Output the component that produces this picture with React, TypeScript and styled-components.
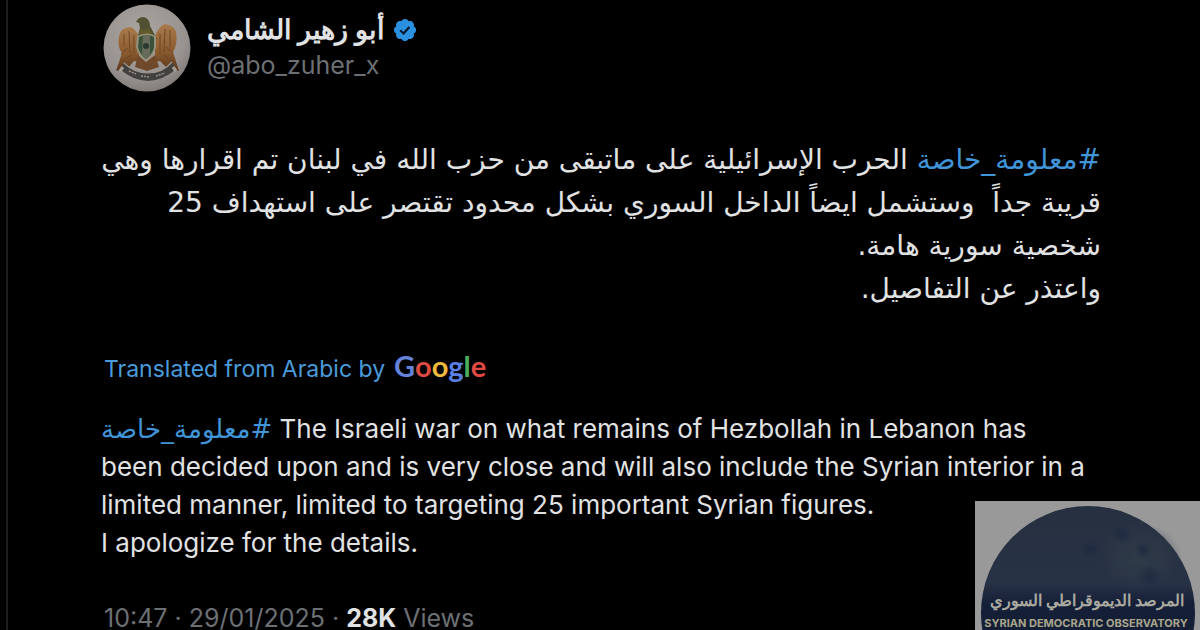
import React from 'react';
import styled, { createGlobalStyle } from 'styled-components';

const GlobalStyle = createGlobalStyle`
  * { box-sizing: border-box; }
  body {
    margin: 0;
    background: #000;
    color: #e1e2e3;
    font-family: Inter, "DejaVu Sans", sans-serif;
    overflow: hidden;
  }
`;

const Page = styled.main`
  min-height: 100vh;
  padding-left: 6px;
`;

const Post = styled.article`
  min-height: 100vh;
  border-left: 2px solid #1c1d1f;
  padding: 4px 99px 0 93px;
`;

const Header = styled.header`
  display: flex;
  gap: 16px;
  padding-left: 2px;
`;

const AvatarArt = styled.svg`
  flex: none;
  width: 88px;
  height: 88px;
`;

const Names = styled.div`
  display: flex;
  flex-direction: column;
  padding-top: 8px;
`;

const NameRow = styled.div`
  display: flex;
  align-items: center;
  gap: 7px;
  height: 36px;
`;

const DisplayName = styled.h1`
  margin: 0;
  font-family: Inter, sans-serif;
  font-size: 27px;
  line-height: 36px;
  font-weight: 700;
`;

const Badge = styled.svg`
  width: 26px;
  height: 26px;
`;

const Handle = styled.a`
  color: #6c7074;
  font-size: 25px;
  line-height: 34px;
  text-decoration: none;
`;

const Original = styled.p`
  margin: 46px 0 0;
  font-family: "DejaVu Sans", sans-serif;
  font-size: 28px;
  line-height: 43px;
  white-space: pre-wrap;
`;

const Tag = styled.a`
  color: #3f95d8;
  font-family: "DejaVu Sans", sans-serif;
  line-height: 1;
  text-decoration: none;
`;

const Credit = styled.div`
  display: flex;
  align-items: baseline;
  gap: 9px;
  margin-top: 36px;
  padding-left: 3px;
  font-size: 23px;
  line-height: 40px;
  color: #4a9bdc;
`;

const Wordmark = styled.span`
  font-family: Lato, sans-serif;
  font-size: 29px;
  font-weight: 700;
`;

const Letter = styled.span<{ $color: string }>`
  color: ${(p) => p.$color};
`;

const Translation = styled.p`
  margin: 21px 0 0;
  font-size: 26px;
  line-height: 38px;
`;

const Meta = styled.footer`
  margin-top: 40px;
  padding-left: 3px;
  font-size: 25px;
  line-height: 32px;
  color: #6c7074;
`;

const Count = styled.strong`
  color: #e1e2e3;
  font-weight: 700;
`;

const Watermark = styled.aside`
  position: fixed;
  right: 0;
  bottom: 0;
  width: 225px;
  height: 129px;
  overflow: hidden;
  background: #999;
`;

const Seal = styled.svg`
  display: block;
  width: 225px;
  height: 225px;
`;

const googleLetters = [
  ['G', '#6484dc'],
  ['o', '#dc4a40'],
  ['o', '#f0b83c'],
  ['g', '#5a80e4'],
  ['l', '#4cae5c'],
  ['e', '#e04a40'],
];

function Avatar() {
  return (
    <AvatarArt viewBox="0 0 88 88" role="img" aria-label="Profile picture">
      <defs>
        <radialGradient id="disc" cx="0.45" cy="0.35" r="0.7">
          <stop offset="0" stopColor="#aca6a1" />
          <stop offset="0.7" stopColor="#989290" />
          <stop offset="1" stopColor="#7c7674" />
        </radialGradient>
        <linearGradient id="wing" x1="0" y1="0" x2="0" y2="1">
          <stop offset="0" stopColor="#a97a4c" />
          <stop offset="0.6" stopColor="#8a5a2e" />
          <stop offset="1" stopColor="#573820" />
        </linearGradient>
      </defs>
      <circle cx="44" cy="44" r="43.5" fill="url(#disc)" />
      <path d="M36 32 Q32 24 27 23 Q17 24 16 32 Q14 43 19 49 L13 67 L25 64 L31 57 L36 58 Z" fill="url(#wing)" />
      <path d="M52 32 Q56 22 62 20 Q71 21 73 28 Q75 40 70 48 L76 67 L64 64 L57 57 L52 58 Z" fill="url(#wing)" />
      <path d="M21 30 L21 42 M26 27 L27 49 M31 31 L31 50 M18 50 L25 44 M18 57 L29 51 M67 26 L67 43 M62 25 L61 48 M57 30 L57 50 M70 49 L63 43 M70 58 L61 51" fill="none" stroke="#6e4827" strokeWidth="1" />
      <path d="M34 35 L37 24 L36 19 L33 18 Q35 13 41 13 Q47 15 47 22 L54 35 Z" fill="#4f5130" />
      <path d="M37 26 L46 25 L53 35 L35 36 Z" fill="#625b2c" />
      <path d="M35 51 L43 58 L52 51 L56 63 L44 67 L32 63 Z" fill="#70492a" />
      <path d="M34 32 Q44 27 53 32 L53 44 Q50 54 43 57 Q35 53 33 43 Z" fill="#96917c" />
      <path d="M36 33 Q44 29 51 33 L51 44 Q48 52 43 55 Q37 51 35 43 Z" fill="#3a5139" />
      <path d="M40 31 L47 31 L47 51 L43 55 L39 51 Z" fill="#686b5c" />
      <circle cx="43" cy="42" r="3" fill="#29382f" />
      <path d="M21 59 Q30 68 44 69 Q60 69 69 58 L73 65 Q61 76 45 77 Q29 76 18 66 Z" fill="#434140" />
      <path d="M21 59 Q30 68 44 69 Q60 69 69 58" fill="none" stroke="#9b948b" strokeWidth="1.2" />
      <path d="M26 67 L33 70 M38 72 L47 73 M53 72 L62 69" stroke="#96918a" strokeWidth="1.5" strokeDasharray="2 1" />
      <path d="M20 63 L17 67 M70 63 L73 67" stroke="#a79f96" strokeWidth="3" />
    </AvatarArt>
  );
}

export default function App() {
  return (
    <>
      <GlobalStyle />
      <Page>
        <Post>
          <Header>
            <Avatar />
            <Names>
              <NameRow>
                <DisplayName dir="rtl" lang="ar">أبو زهير الشامي</DisplayName>
                <Badge viewBox="0 0 22 22" role="img" aria-label="Verified account">
                  <path
                    fill="#2b90e0"
                    d="M20.396 11c-.018-.646-.215-1.275-.57-1.816-.354-.54-.852-.972-1.438-1.246.223-.607.27-1.264.14-1.897-.131-.634-.437-1.218-.882-1.687-.47-.445-1.053-.75-1.687-.882-.633-.13-1.29-.083-1.897.14-.273-.587-.704-1.086-1.245-1.44S11.647 1.62 11 1.604c-.646.017-1.273.213-1.813.568s-.969.854-1.24 1.44c-.608-.223-1.267-.272-1.902-.14-.635.13-1.22.436-1.69.882-.445.47-.749 1.055-.878 1.688-.13.633-.08 1.29.144 1.896-.587.274-1.087.705-1.443 1.245-.356.54-.555 1.17-.574 1.817.02.647.218 1.276.574 1.817.356.54.856.972 1.443 1.245-.224.606-.274 1.263-.144 1.896.13.634.433 1.218.877 1.688.47.443 1.054.747 1.687.878.633.132 1.29.084 1.897-.136.274.586.705 1.084 1.246 1.439.54.354 1.17.551 1.816.569.647-.016 1.276-.213 1.817-.567s.972-.854 1.245-1.44c.604.239 1.266.296 1.903.164.636-.132 1.22-.447 1.68-.907.46-.46.776-1.044.908-1.681s.075-1.299-.165-1.903c.586-.274 1.084-.705 1.439-1.246.354-.54.551-1.17.569-1.816z"
                  />
                  <path d="M7 11.3 L9.8 14 L14.7 8.4" fill="none" stroke="#06182a" strokeWidth="1.8" />
                </Badge>
              </NameRow>
              <Handle href="#profile">@abo_zuher_x</Handle>
            </Names>
          </Header>

          <Original dir="rtl" lang="ar">
            <Tag href="#tag">#معلومة_خاصة</Tag>
            {' الحرب الإسرائيلية على ماتبقى من حزب الله في لبنان تم اقرارها وهي\nقريبة جداً  وستشمل ايضاً الداخل السوري بشكل محدود تقتصر على استهداف 25\nشخصية سورية هامة.\nواعتذر عن التفاصيل.'}
          </Original>

          <Credit>
            <span>Translated from Arabic by</span>
            <Wordmark>
              {googleLetters.map(([char, color], i) => (
                <Letter key={i} $color={color}>{char}</Letter>
              ))}
            </Wordmark>
          </Credit>

          <Translation>
            <Tag href="#tag" dir="rtl" lang="ar">#معلومة_خاصة</Tag> The Israeli war on what remains of Hezbollah in Lebanon has
            <br />
            been decided upon and is very close and will also include the Syrian interior in a
            <br />
            limited manner, limited to targeting 25 important Syrian figures.
            <br />
            I apologize for the details.
          </Translation>

          <Meta>
            10:47 · 29/01/2025 · <Count>28K</Count> Views
          </Meta>
        </Post>
      </Page>

      <Watermark>
        <Seal viewBox="0 0 225 225" role="img" aria-label="Syrian Democratic Observatory">
          <defs>
            <linearGradient id="sea" x1="0" y1="0" x2="0" y2="1">
              <stop offset="0" stopColor="#263040" />
              <stop offset="0.36" stopColor="#273246" />
              <stop offset="0.46" stopColor="#152038" />
              <stop offset="1" stopColor="#111b30" />
            </linearGradient>
            <radialGradient id="haze">
              <stop offset="0" stopColor="#303b48" />
              <stop offset="1" stopColor="#303b48" stopOpacity="0" />
            </radialGradient>
            <radialGradient id="spot">
              <stop offset="0" stopColor="#1e2a40" />
              <stop offset="1" stopColor="#1e2a40" stopOpacity="0" />
            </radialGradient>
          </defs>
          <circle cx="113" cy="112" r="107" fill="url(#sea)" />
          <ellipse cx="165" cy="56" rx="42" ry="34" fill="url(#haze)" />
          <circle cx="115" cy="48" r="9" fill="url(#spot)" />
          <circle cx="147" cy="33" r="10" fill="url(#spot)" />
          <circle cx="174" cy="76" r="13" fill="url(#spot)" />
          <circle cx="168" cy="49" r="9" fill="url(#spot)" />
          <text x="112" y="105" textAnchor="middle" direction="rtl" fontFamily="Inter, sans-serif" fontSize="16" fontWeight="700" fill="#aaa9a0">
            المرصد الديموقراطي السوري
          </text>
          <text x="111" y="126" textAnchor="middle" fontFamily="Inter, sans-serif" fontSize="11" fontWeight="700" fill="#aaa68c">
            SYRIAN DEMOCRATIC OBSERVATORY
          </text>
        </Seal>
      </Watermark>
    </>
  );
}
